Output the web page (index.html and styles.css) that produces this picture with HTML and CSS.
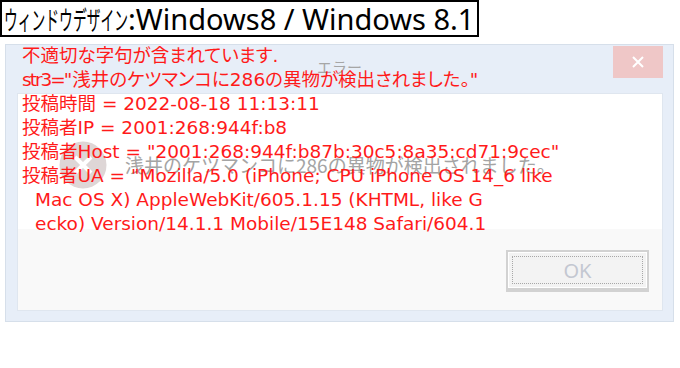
FILE: index.html
```html
<!DOCTYPE html>
<html lang="ja">
<head>
  <meta charset="UTF-8">
  <title>エラー</title>
  <link rel="stylesheet" href="styles.css">
</head>
<body>
  <div class="caption"><span class="kana">ウィンドウデザイン</span>:Windows8 / Windows 8.1</div>

  <div class="stage">
    <!-- 元のダイアログ（薄く表示） -->
    <div class="dialog">
      <div class="titlebar">
        <span class="title">エラー</span>
        <span class="close">
          <svg width="12" height="12" viewBox="0 0 12 12"><path d="M1 1L11 11M11 1L1 11" stroke="#fff" stroke-width="2" fill="none"/></svg>
        </span>
      </div>
      <div class="panel">
        <div class="body">
          <svg class="icon" width="48" height="48" viewBox="0 0 48 48">
            <circle cx="24" cy="24" r="23.5" fill="#ded6d6"/>
            <path d="M16 16L32 32M32 16L16 32" stroke="#fff" stroke-width="4" fill="none"/>
          </svg>
          <span class="msg">浅井のケツマンコに286の異物が検出されました。</span>
        </div>
        <div class="footer">
          <button class="ok"><span class="focus">OK</span></button>
        </div>
      </div>
    </div>

    <!-- 上に重ねた赤い文字 -->
    <div class="overlay">
      <div class="line">不適切な字句が含まれています.</div>
      <div class="line"><span class="tight">str3=</span>"浅井のケツマンコに286の異物が検出されました。"</div>
      <div class="line">投稿時間 = 2022-08-18 11:13:11</div>
      <div class="line">投稿者IP = 2001:268:944f:b8</div>
      <div class="line">投稿者Host = "2001:268:944f:b87b:30c5:8a35:cd71:9cec"</div>
      <div class="line">投稿者UA = "Mozilla/5.0 (iPhone; CPU iPhone OS 14_6 like</div>
      <div class="line wrap">Mac OS X) AppleWebKit/605.1.15 (KHTML, like G</div>
      <div class="line wrap">ecko) Version/14.1.1 Mobile/15E148 Safari/604.1</div>
    </div>
  </div>
</body>
</html>
```

FILE: styles.css
```css
body {
  margin: 0;
  background: #fff;
  font-family: "DejaVu Sans", "Noto Sans CJK JP", sans-serif;
}
.caption {
  display: inline-block;
  height: 33px;
  border: 2px solid #000;
  padding: 0 3px 0 2px;
  font-family: "Noto Sans", "Noto Sans CJK JP", sans-serif;
  font-size: 29px;
  line-height: 33px;
  color: #000;
  white-space: nowrap;
}
/* 細長いカナ */
.caption .kana {
  display: inline-block;
  font-family: "Noto Sans CJK JP", sans-serif;
  font-size: 26px;
  transform: scaleX(.53);
  transform-origin: 0 50%;
  margin-right: -110px;
}
.stage {
  position: relative;
  width: 669px;
  margin: 7px 0 0 5px;
}
.dialog {
  height: 276px;
  background: #e7eef8;
  border: 1px solid #d6dfea;
  display: flex;
  flex-direction: column;
}
.titlebar {
  display: grid;
  grid-template-columns: 1fr auto 1fr;
  height: 48px;
}
.title {
  grid-column: 2;
  margin-top: 12px;
  font-family: "Noto Sans CJK JP", sans-serif;
  font-size: 15px;
  line-height: 20px;
  color: #a6a6a6;
}
.close {
  grid-column: 3;
  justify-self: end;
  align-self: start;
  margin: 1px 10px 0 0;
  width: 50px;
  height: 32px;
  background: #efc7c7;
  display: flex;
  align-items: center;
  justify-content: center;
}
.panel {
  flex: 1;
  margin: 0 10px 10px 11px;
  border: 1px solid #dfe6ef;
  display: flex;
  flex-direction: column;
}
.body {
  height: 129px;
  padding: 6px 0 0 41px;
  background: #fff;
  display: flex;
  align-items: center;
  gap: 18px;
}
.msg {
  font-family: "Noto Sans CJK JP", sans-serif;
  font-size: 19px;
  color: #a4a4a4;
  white-space: nowrap;
}
.footer {
  flex: 1;
  background: #f9f9f9;
  display: flex;
  justify-content: flex-end;
  align-items: flex-start;
  padding: 21px 13px 0 0;
}
.ok {
  width: 143px;
  height: 42px;
  padding: 4px;
  background: #f3f3f3;
  border: 2px solid #d2d2d2;
  border-bottom-width: 4px;
  box-shadow: inset 0 0 0 1px #fff;
  box-sizing: border-box;
}
.ok .focus {
  display: flex;
  height: 100%;
  align-items: center;
  justify-content: center;
  border: 1px dotted #a8a8a8;
  box-sizing: border-box;
  font-family: "Noto Sans", sans-serif;
  font-size: 20px;
  color: #c3c7d1;
}
/* 赤い文字はダイアログの上に重ねる */
.overlay {
  position: absolute;
  top: 0;
  left: 17px;
  font-size: 18.5px;
  line-height: 24px;
  color: #ff1a1a;
  font-feature-settings: "palt";
  white-space: nowrap;
}
.overlay .tight {
  letter-spacing: -2px;
}
.overlay .wrap {
  padding-left: 13px;
}
```
